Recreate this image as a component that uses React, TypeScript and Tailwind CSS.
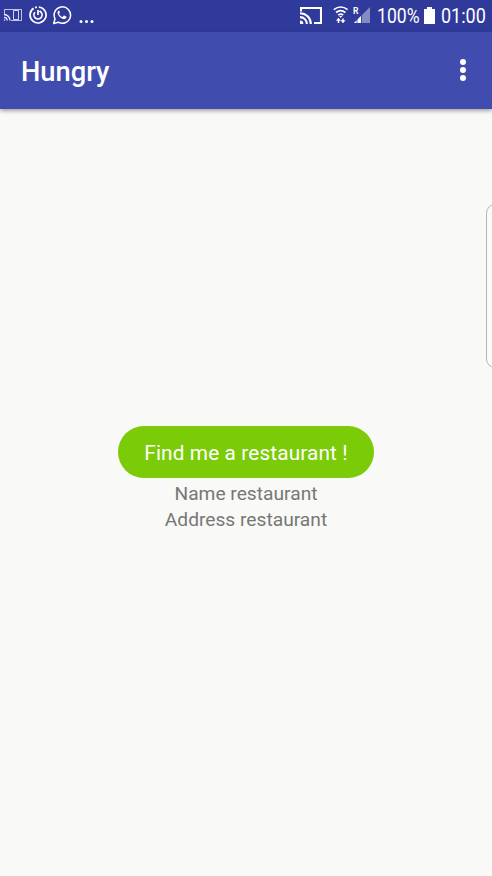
function MirrorIcon() {
  return (
    <svg className="ml-[3px] h-8 w-5 shrink-0" viewBox="0 0 20 32" fill="none" stroke="#f0f1fa" strokeWidth="1">
      <path d="M1.5 14V9.5h17v11H8" opacity=".75" />
      <path d="M10.5 10.5h5v9h-5Z" opacity=".85" />
      <path d="M1 14.5a6 6 0 0 1 6 6M1 17.3a3.2 3.2 0 0 1 3.2 3.2" strokeWidth="1.3" />
      <circle cx="1.6" cy="20" r=".8" fill="#f0f1fa" stroke="none" />
    </svg>
  );
}

function PowerIcon() {
  return (
    <svg className="ml-1.5 h-8 w-[18px] shrink-0" viewBox="0 0 18 32" fill="none" stroke="#fff" strokeWidth="1.7">
      <path d="M9.8 7A8 8 0 1 1 4.6 8.3M6 7.6l1.8-.5" />
      <path d="M5.9 12.2A4.1 4.1 0 1 0 12.1 12.2L10.5 11" />
      <path d="M9 10v5" />
    </svg>
  );
}

function WhatsAppIcon() {
  return (
    <svg className="ml-[5px] h-8 w-5 shrink-0" viewBox="0 0 20 32">
      <path d="M1.7 23.5 3 18.7A8.2 8.2 0 1 1 6.3 22.2Z" fill="none" stroke="#fff" strokeWidth="1.5" strokeLinejoin="round" />
      <path d="M7.1 10.5c-.5 0-1.7.8-1.6 2.5.2 2 3.4 5.7 6 6.1 1.5.2 3-.8 3-1.9 0-.4-.1-.5-.4-.7l-1.8-.9c-.3-.1-.5 0-.7.2l-.8 1c-.2.2-.4.2-.7.1-1.2-.5-2.4-1.6-3-2.9-.1-.2 0-.4.1-.6l.6-.8c.1-.2.1-.4 0-.6l-.7-1.5Z" fill="#fff" />
    </svg>
  );
}

function CastIcon() {
  return (
    <svg className="h-8 w-[22px] shrink-0" viewBox="0 0 22 32" fill="none" stroke="#fff" strokeWidth="2.1">
      <path d="M1 11.5V8h20v15h-7" />
      <path d="M0 13.2a10.8 10.8 0 0 1 10.8 10.8M0 17.1a6.9 6.9 0 0 1 6.9 6.9" strokeWidth="2.1" />
      <path d="M0 20.6a3.4 3.4 0 0 1 3.4 3.4H0Z" fill="#fff" stroke="none" />
    </svg>
  );
}

function WifiIcon() {
  return (
    <svg className="ml-[11px] h-8 w-4 shrink-0" viewBox="0 0 16 32" fill="none" stroke="#fff" strokeWidth="1.7">
      <path d="M.8 9.7q6.9-5.4 13.8 0M3 12.5q4.7-3.6 9.4 0M5.2 15q2.5-1.9 5 0" />
      <path d="m6 16 1.7 1.8L9.4 16Z" fill="#fff" stroke="none" />
      <path d="M5.5 23v-3M10 18.5v3" strokeWidth="1.5" />
      <path d="m3 20.7 2.5-3 2.5 3ZM7.5 20.3l2.5 3 2.5-3Z" fill="#fff" stroke="none" />
    </svg>
  );
}

function SignalIcon() {
  return (
    <svg className="ml-1 h-8 w-[18px] shrink-0" viewBox="0 0 18 32">
      <path d="M17 7v16H1Z" fill="#858bc5" />
      <path d="M8 16v7H1Z" fill="#fff" />
      <path d="M4 19v4M8.5 15v8" stroke="#3039a0" strokeWidth=".8" />
      <text x="0" y="13.5" fill="#fff" fontFamily="Roboto, sans-serif" fontSize="8.5" fontWeight="700">R</text>
    </svg>
  );
}

function StatusBar() {
  return (
    <header className="flex h-8 shrink-0 items-center bg-[#303a9b] text-white">
      <MirrorIcon />
      <PowerIcon />
      <WhatsAppIcon />
      <svg className="ml-[7px] h-8 w-4 shrink-0" viewBox="0 0 16 32" fill="#fff">
        <circle cx="2" cy="21.5" r="1.5" />
        <circle cx="7.5" cy="21.5" r="1.5" />
        <circle cx="13" cy="21.5" r="1.5" />
      </svg>
      <div className="ml-auto flex h-8 w-48 shrink-0 items-center">
        <CastIcon />
        <WifiIcon />
        <SignalIcon />
        <span className="ml-1.5 w-[43px] origin-left scale-x-[.88] text-[20px] leading-8 whitespace-nowrap">100%</span>
        <svg className="ml-1 h-8 w-3 shrink-0" viewBox="0 0 12 32">
          <path d="M3 7h5v2h3v15H0V9h3Z" fill="#fff" />
        </svg>
        <span className="ml-[5px] w-[46px] origin-left scale-x-[.9] text-[20px] leading-8 whitespace-nowrap">01:00</span>
      </div>
    </header>
  );
}

export default function App() {
  return (
    <div className="relative flex h-[876px] w-[492px] flex-col overflow-hidden bg-[#f9f9f7] font-[Roboto,sans-serif]">
      <StatusBar />
      <div className="z-10 flex h-[77px] shrink-0 items-center justify-between bg-[#404dae] pr-[26px] pl-[21px] text-white shadow-[0_2px_4px_rgba(0,0,0,0.35)]">
        <h1 className="pt-[2px] text-[27.3px] leading-8 font-medium">Hungry</h1>
        <button aria-label="More options" className="mb-px flex flex-col gap-[2.3px]">
          <i className="size-[6px] rounded-full bg-white" />
          <i className="size-[6px] rounded-full bg-white" />
          <i className="size-[6px] rounded-full bg-white" />
        </button>
      </div>
      <main className="flex flex-1 flex-col items-center pt-[317px] text-[19.2px] leading-[26px] text-[#777775]">
        <button className="h-[52px] w-[256px] rounded-full bg-[#7ccb08] pt-px text-[20.8px] tracking-[0.12px] text-white">Find me a restaurant !</button>
        <p className="pt-[3px]">Name restaurant</p>
        <p>Address restaurant</p>
      </main>
      <div className="absolute top-[204px] -right-3 h-[164px] w-[18px] rounded-[9px] border border-[#b5b5b3] bg-[#fbfbf9]" />
    </div>
  );
}
